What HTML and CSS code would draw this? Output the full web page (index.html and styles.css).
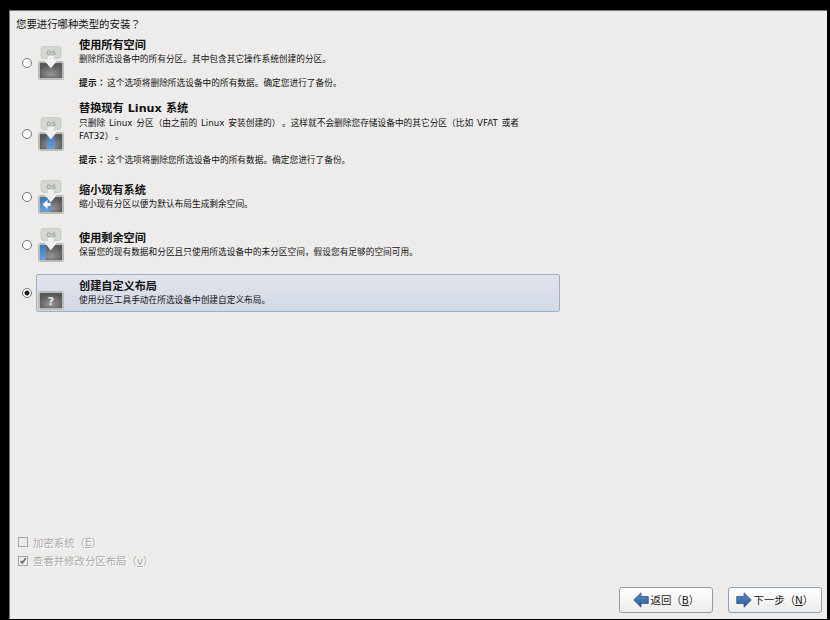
FILE: index.html
```html
<!DOCTYPE html>
<html lang="zh-CN">
<head>
<meta charset="utf-8">
<title>安装类型</title>
<link rel="stylesheet" href="styles.css">
</head>
<body>
<svg class="defs" width="0" height="0" aria-hidden="true">
  <defs>
    <radialGradient id="disk" cx=".5" cy=".75" r=".65"><stop offset="0" stop-color="#969696"/><stop offset="1" stop-color="#585858"/></radialGradient>
    <linearGradient id="blue" x2="0" y2="1"><stop offset="0" stop-color="#3d77b5"/><stop offset="1" stop-color="#68a0db"/></linearGradient>
    <linearGradient id="arrow" x2="0" y2="1"><stop offset="0" stop-color="#5b8cc6"/><stop offset="1" stop-color="#285a9c"/></linearGradient>
    <g id="box">
      <rect x=".5" y="15.5" width="25" height="18" rx="1" fill="#e9ebe7" stroke="#b9bbb7"/>
      <rect x="2" y="17" width="22" height="15" fill="url(#disk)" stroke="#555" stroke-width=".6"/>
    </g>
    <g id="os">
      <rect x="3" y=".5" width="20" height="12" rx="2.5" fill="#d3d7cf" stroke="#c3c8bf" stroke-width=".8"/>
      <text x="13" y="8.700" class="os-text">OS</text>
    </g>
    <path id="down" d="M9.800 10h6v5h3.200l-6.200 7.200L6.600 15h3.200z" fill="#f0f1ee"/>
  </defs>
</svg>
<main class="window">
  <h1 class="question">您要进行哪种类型的安装<span class="mid" lang="zh-TW">？</span></h1>
  <div class="options">
    <label class="option tall">
      <span class="radio"></span>
      <span class="card">
        <svg class="icon" viewBox="0 0 26 34"><use href="#box"/><use href="#os"/><use href="#down"/></svg>
        <span class="copy"><b class="name">使用所有空间</b><span class="line">删除所选设备中的所有分区。其中包含其它操作系统创建的分区。</span><span class="line hint"><b class="tip">提示<span class="mid" lang="zh-TW">：</span></b>这个选项将删除所选设备中的所有数据。确定您进行了备份。</span></span>
      </span>
    </label>
    <label class="option taller">
      <span class="radio"></span>
      <span class="card">
        <svg class="icon" viewBox="0 0 26 34"><use href="#box"/><rect x="9" y="17" width="8" height="15" fill="url(#blue)"/><use href="#os"/><use href="#down"/></svg>
        <span class="copy"><b class="name">替换现有 Linux 系统</b><span class="line">只删除 Linux 分区（由之前的 Linux 安装创建的）<span class="stop">。</span>这样就不会删除您存储设备中的其它分区（比如 VFAT 或者</span><span class="line">FAT32）<span class="stop">。</span></span><span class="line hint"><b class="tip">提示<span class="mid" lang="zh-TW">：</span></b>这个选项将删除您所选设备中的所有数据。确定您进行了备份。</span></span>
      </span>
    </label>
    <label class="option">
      <span class="radio"></span>
      <span class="card">
        <svg class="icon" viewBox="0 0 26 34"><use href="#box"/><rect x="2" y="17" width="11" height="15" fill="url(#blue)"/><use href="#os"/><use href="#down"/><path d="M4.500 24.500l5-4.500v3h3v3h-3v3z" fill="#fff"/></svg>
        <span class="copy"><b class="name">缩小现有系统</b><span class="line">缩小现有分区以便为默认布局生成剩余空间。</span></span>
      </span>
    </label>
    <label class="option">
      <span class="radio"></span>
      <span class="card">
        <svg class="icon" viewBox="0 0 26 34"><use href="#box"/><rect x="2" y="17" width="6" height="15" fill="url(#blue)"/><use href="#os"/><use href="#down"/></svg>
        <span class="copy"><b class="name">使用剩余空间</b><span class="line">保留您的现有数据和分区且只使用所选设备中的未分区空间，假设您有足够的空间可用。</span></span>
      </span>
    </label>
    <label class="option">
      <span class="radio checked"></span>
      <span class="card selected">
        <svg class="icon" viewBox="0 0 26 34"><use href="#box"/><text x="13" y="28.500" class="ask">?</text></svg>
        <span class="copy"><b class="name">创建自定义布局</b><span class="line">使用分区工具手动在所选设备中创建自定义布局。</span></span>
      </span>
    </label>
  </div>
  <div class="checks">
    <label class="check"><span class="tick"></span>加密系统（<u>E</u>）</label>
    <label class="check"><span class="tick"><svg viewBox="0 0 10 10"><path d="M2 5l2 2.500L8.500 1.500" fill="none" stroke="#666" stroke-width="1.900"/></svg></span>查看并修改分区布局（<u>v</u>）</label>
  </div>
  <footer class="actions">
    <button class="btn"><svg class="arrow" viewBox="0 0 16 16"><path d="M.7 8L8 .8v3.700h7.300v7H8v3.700z" fill="url(#arrow)" stroke="#204a87" stroke-width=".7"/></svg><span class="label">返回（<u>B</u>）</span></button>
    <button class="btn next"><svg class="arrow" viewBox="0 0 16 16"><path d="M15.300 8L8 .8v3.700H.7v7H8v3.700z" fill="url(#arrow)" stroke="#204a87" stroke-width=".7"/></svg><span class="label">下一步（<u>N</u>）</span></button>
  </footer>
</main>
</body>
</html>
```
FILE: styles.css
```css
* { box-sizing: border-box; }
body {
  margin: 0;
  height: 620px;
  padding: 10px 3px 1px 9px;
  background: #000;
  overflow: hidden;
  font-family: "DejaVu Sans", "Noto Sans CJK SC", sans-serif;
  text-spacing-trim: space-all;
  color: #111;
}
.defs { position: absolute; }
.window {
  display: flex;
  flex-direction: column;
  height: 609px;
  background: #edeceb;
  border-left: 1px solid #777;
  border-top: 1px solid #777;
}
.question {
  margin: 0;
  height: 25px;
  padding: 6px 0 0 6px;
  font-size: 10.4px;
  line-height: 15px;
  font-weight: 400;
}
.mid { font-family: "Noto Sans CJK TC", sans-serif; line-height: 1; }
.stop { margin-left: 1.5px; }
.options { display: flex; flex-direction: column; gap: 10px; }
.option { display: flex; align-items: center; height: 38px; padding-left: 12px; }
.tall { height: 54px; }
.taller { height: 68px; }
.tall .copy { padding-top: 1px; }
.radio {
  width: 10px;
  height: 10px;
  border: 1px solid #777;
  border-radius: 50%;
  background: #fff;
}
.checked { background: radial-gradient(circle, #1a1a1a 0 2px, #fff 2.9px); }
.card {
  display: flex;
  align-items: center;
  width: 524px;
  height: 100%;
  margin-left: 4px;
  border: 1px solid transparent;
  border-radius: 2px;
  padding-left: 1px;
}
.selected { background: linear-gradient(#e0e4ed, #d2d9e5); border-color: #9aafc9; }
.icon { width: 26px; height: 34px; }
.copy { margin-left: 15px; font-size: 8.7px; white-space: nowrap; word-spacing: 1.15px; }
.name { display: block; font-size: 11.15px; line-height: 15px; word-spacing: .3px; }
.line { display: block; height: 12.3px; line-height: 12.3px; }
.hint { margin-top: 12px; }
.taller .name { line-height: 14px; padding-bottom: 1.5px; }
.tip { display: inline-block; width: 28px; letter-spacing: .3px; }
.os-text { font: bold 6px "DejaVu Sans", sans-serif; fill: #a3a8a0; text-anchor: middle; }
.ask { font: bold 11px "DejaVu Sans", sans-serif; fill: #eee; text-anchor: middle; }
.checks { margin: auto 0 17px 8px; }
.check {
  display: flex;
  align-items: center;
  height: 18.500px;
  font-size: 10.4px;
  color: #aaa9a7;
  text-shadow: 1px 1px #fff;
}
.tick { width: 10px; height: 10px; margin-right: 5px; border: 1px solid #a5a5a3; display: flex; }
.tick svg { width: 8px; height: 8px; }
.actions { display: flex; justify-content: flex-end; gap: 15px; padding: 0 5.500px 6px 0; }
.btn {
  display: flex;
  align-items: center;
  justify-content: flex-start;
  width: 94px;
  height: 26px;
  padding: 0 0 0 13.500px;
  border: 1px solid #9b9b99;
  border-radius: 3px;
  background: linear-gradient(#fff, #ececeb);
  font: 10.4px "DejaVu Sans", "Noto Sans CJK SC", sans-serif;
  color: #222;
  white-space: nowrap;
}
.label { margin-top: -2px; }
.next { border-color: #86a3c6; padding-left: 7.500px; }
.arrow { flex: none; width: 16px; height: 16px; margin-right: 1.5px; }
```
